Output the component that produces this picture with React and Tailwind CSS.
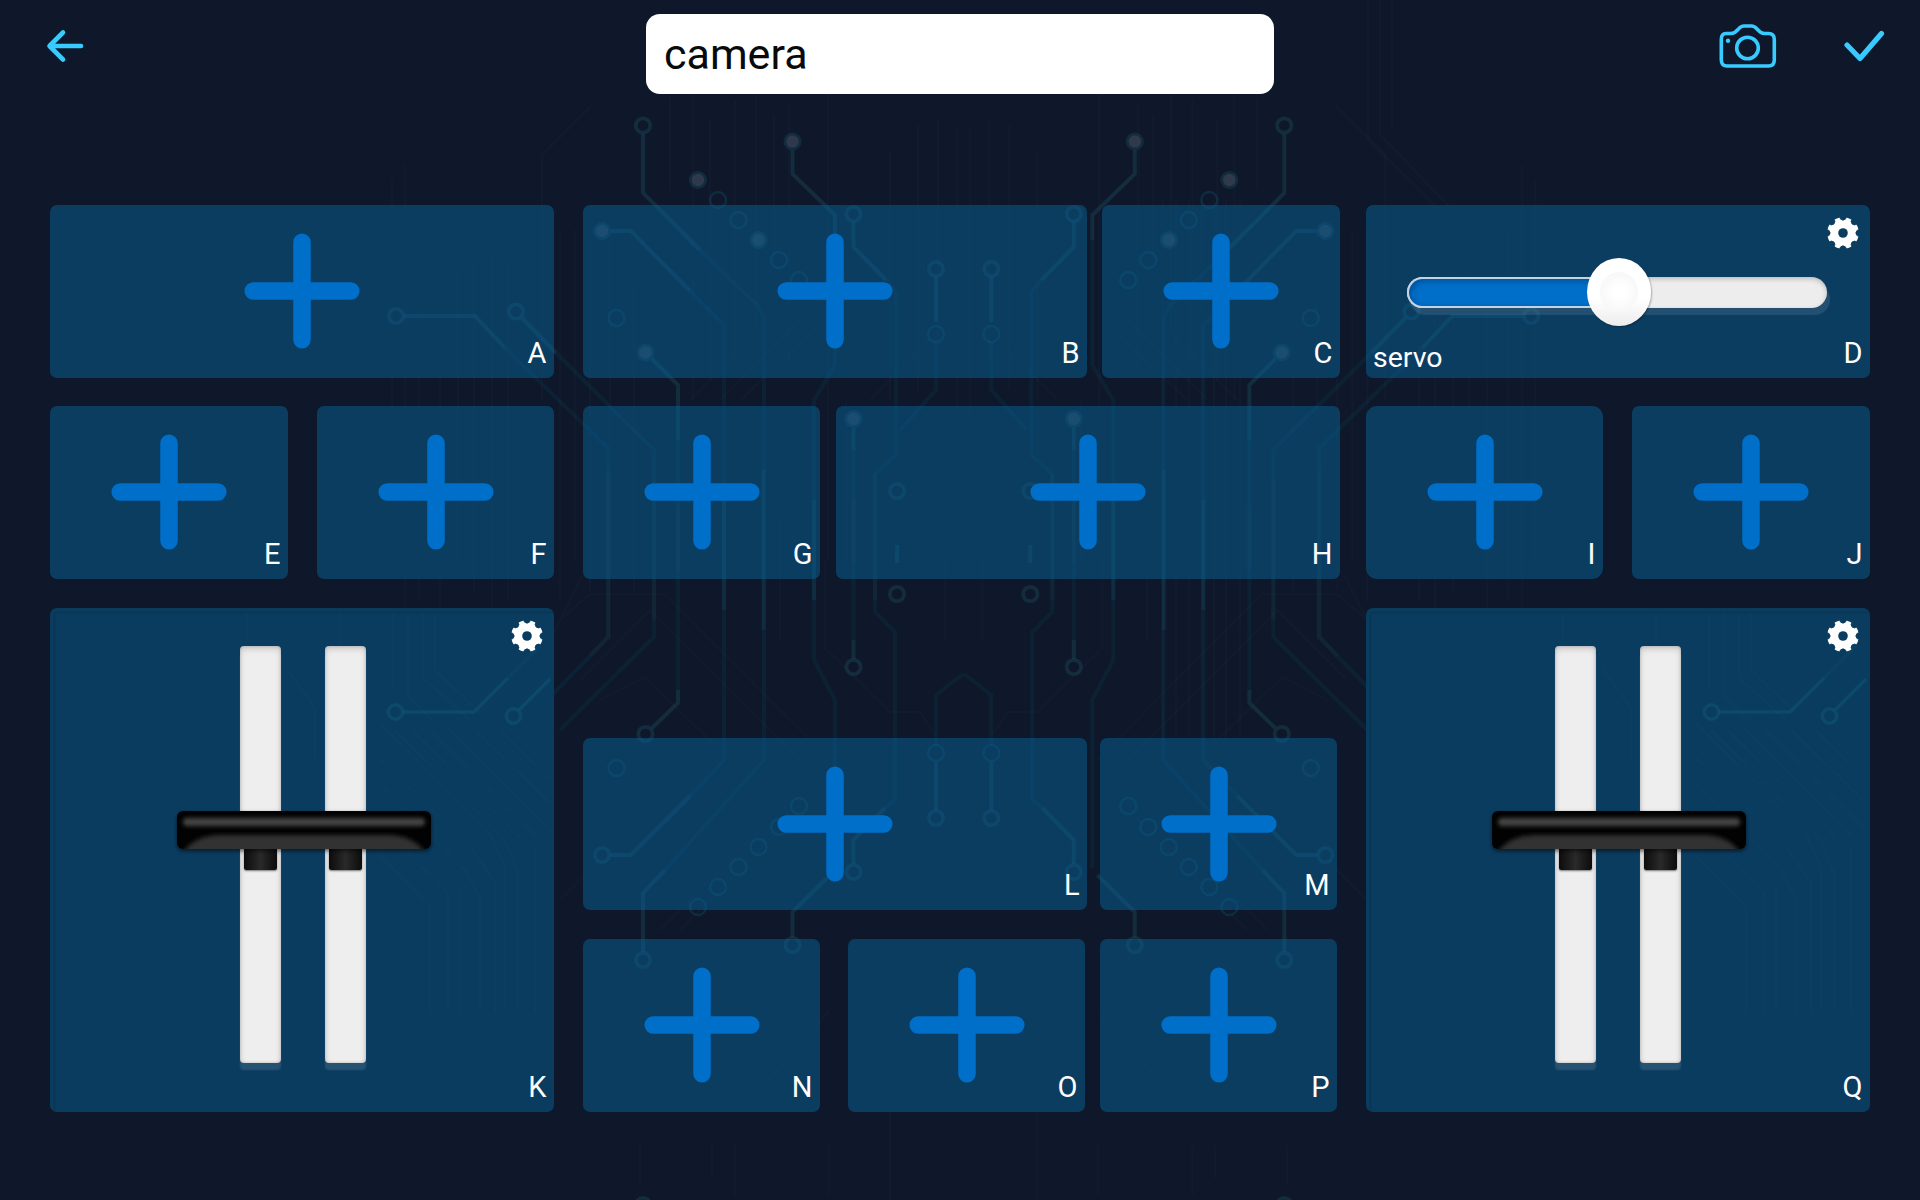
import React from "react";

const ring = (x, y, k) => <circle key={k} cx={x} cy={y} r="7.2" strokeWidth="3.8" />;
const faintRing = ([x, y]) => <circle key={x + "-" + y} cx={x} cy={y} r="8" strokeWidth="2.4" stroke="#0f6c8c" strokeOpacity="0.24" />;
const dot = (x, y) => (
  <g key={x + "d" + y} stroke="none">
    <circle cx={x} cy={y} r="9" fill="#1f5a70" fillOpacity="0.3" />
    <circle cx={x} cy={y} r="6.2" fill="#7a5f6c" fillOpacity="0.28" />
  </g>
);

const hairlines = [
  [392, 180, 560], [405, 165, 640], [419, 230, 600], [440, 300, 700], [458, 270, 560], [474, 260, 590], [492, 250, 640], [508, 260, 600],
  [560, 230, 600], [575, 230, 560], [590, 235, 590], [610, 230, 640], [634, 285, 590], [670, 98, 190], [693, 95, 400], [710, 120, 380],
  [735, 100, 360], [756, 95, 330], [774, 115, 260], [789, 105, 370], [828, 90, 560], [846, 400, 560], [780, 520, 640], [825, 560, 650],
  [890, 150, 400], [918, 125, 390], [938, 120, 360], [957, 130, 420], [945, 560, 640],
];

function HalfCircuit() {
  return (
    <g>
      <g strokeOpacity="0.19">
        {ring(643, 125.5, 1)}
        <path d="M643 134V193L700 250" />
        <path d="M792.5 150V174L835 215V240" />
        <path d="M611 231H631L690 291" />
        <path d="M652 359L678 385V440" />
        {ring(853.5, 214, 2)}
        <path d="M853.5 222V247L886 280" />
        {ring(936, 269, 3)}
        <path d="M936 277V322" />
        {ring(396, 316, 4)}
        <path d="M404 316H475L505 348" />
        {ring(516, 311.5, 5)}
        <path d="M522 318L556 353" />
        <path d="M853.5 428V450M853.5 640V659" />
        {ring(897, 491, 6)}
        {ring(897, 594, 7)}
        <path d="M897 545V563" />
        {ring(853.5, 667, 8)}
        <path d="M678 690V703L652 728" />
        {ring(645.5, 734, 9)}
        {ring(602, 855, 10)}
        <path d="M610 855H631L690 796" />
        {ring(643, 960, 11)}
        <path d="M643 952V893L665 870" />
        {ring(792.5, 945, 12)}
        <path d="M792.5 937V912L830 875" />
        {ring(853.5, 872, 13)}
        <path d="M853.5 864V840L885 808" />
        {ring(936, 818, 14)}
        <path d="M936 810V762" />
        {ring(643, 1205, 15)}
      </g>
      <g strokeOpacity="0.13">
        <path d="M608 470V637L590 656M654 480V620" />
        <path d="M678 505V570" />
        <path d="M724 500V610M763.5 470V630M814 500V600" />
        <path d="M875 474V600M853.5 500V563" />
      </g>
      <g stroke="#0a5f84" strokeOpacity="0.12">
        <path d="M700 250L758 306L764 318V760L665 870" />
        <path d="M690 291L724 325V760L690 796" />
        <path d="M835 240V365L814 400V660L835 700V868" />
        <path d="M505 348L608 448V470M556 353L654 450V480" />
        <path d="M590 656L560 687L470 775M654 620V637L560 730" />
        <path d="M886 280L896 292V455L875 474M875 600V612L895 632V800L885 808" />
        <path d="M936 342V390L900 430M936 745V695L963 674" />
        <path d="M678 440V505M678 570V690M853.5 563V640M853.5 450V500" />
      </g>
      {[[718, 200], [738.5, 220], [779, 260], [799, 280], [616.5, 318], [936, 334], [616.5, 768], [799, 806], [779, 827], [758.5, 847], [738.5, 867], [718, 887], [698, 907], [936, 753]].map(faintRing)}
      {[[698, 180], [758.5, 240], [792.5, 141.5], [602, 231], [645.5, 352.5], [853.5, 419]].map(([x, y]) => dot(x, y))}
      <g stroke="#6a6f8c" strokeWidth="2.5" strokeOpacity="0.035">
        {hairlines.map(([x, a, b]) => <path key={x} d={`M${x} ${a}V${b}`} />)}
        <path d="M542 400V155L592 105" />
        <path d="M560 620L590 594H665L830 760M580 680L650 610L800 760M600 700L645 677L730 760M545 650L583 575" />
        <path d="M690 400L760 330M720 400L800 320M740 400L820 325M870 400L930 340M827 650L890 712H920L935 735" />
        <path d="M560 900L640 820M660 930L760 830M680 930L790 820M760 1090L830 1010M640 1145V1185M712 1145V1178M735 1145V1195M829 1145V1195M890 1112V1200" />
      </g>
    </g>
  );
}

function Circuit() {
  return (
    <svg className="pointer-events-none absolute inset-0" width="1920" height="1200" viewBox="0 0 1920 1200" fill="none" stroke="#2d8796" strokeWidth="4">
      <HalfCircuit />
      <g transform="matrix(-1 0 0 1 1927.3 0)">
        <HalfCircuit />
      </g>
      <g stroke="#6a6f8c" strokeWidth="2.5" strokeOpacity="0.035">
        {[1163, 1176, 1189, 1202, 1214, 1226, 1240].map((x) => <path key={x} d={`M${x} 200V740`} />)}
        <path d="M1368 0V140L1440 210M1380 0V135L1455 212M1392 0V130" />
      </g>
    </svg>
  );
}

function Cell({ label, className }) {
  return (
    <div className={`relative flex items-center justify-center bg-[#086298]/50 pb-px ${className}`}>
      <svg width="116" height="116" viewBox="0 0 116 116" stroke="#006fc9" strokeWidth="17.5" strokeLinecap="round">
        <path d="M58 9.2V106.8M9.2 58H106.8" />
      </svg>
      <Letter>{label}</Letter>
    </div>
  );
}

function Letter({ children }) {
  return <span className="absolute right-[7.5px] bottom-[7px] text-[29px] leading-[36px] text-white">{children}</span>;
}

function Gear({ className }) {
  const notches = [0, 45, 90, 135, 180, 225, 270, 315];
  return (
    <svg className={`absolute ${className}`} width="32" height="32" viewBox="-16 -16 32 32">
      <mask id="gear-cutouts">
        <rect x="-16" y="-16" width="32" height="32" fill="#fff" />
        <circle r="4.8" fill="#000" />
        {notches.map((a) => (
          <path key={a} transform={`rotate(${a})`} d="M-3.6 -17L-2.6 -14Q0 -11.6 2.6 -14L3.6 -17Z" fill="#000" stroke="#000" strokeWidth="0.8" />
        ))}
      </mask>
      <circle r="15.8" fill="#fff" mask="url(#gear-cutouts)" />
    </svg>
  );
}

function ServoPanel() {
  return (
    <div className="relative flex h-[173px] items-center rounded-[7px] bg-[#086298]/50 pt-px pl-[41px]">
      <div className="relative h-[31px] w-[420px] rounded-full bg-[#ededed] shadow-[3px_7px_1px_rgba(255,255,255,0.10),inset_0_2px_5px_rgba(0,0,0,0.22)]">
        <div className="h-full w-[212px] rounded-l-full border-2 border-r-0 border-[#c3d3e2] bg-[#006fc9] shadow-[inset_2px_2px_6px_rgba(0,40,90,0.45)]" />
        <div className="absolute top-[-19px] left-[179.5px] flex h-[68px] w-[64px] items-center justify-center rounded-[50%] bg-gradient-to-b from-white from-60% to-[#ececec] shadow-[1px_1px_2px_rgba(0,0,0,0.3)]">
          <div className="h-[40px] w-[38px] rounded-[50%] bg-[radial-gradient(circle,#ffffff_20%,#f3f3f3_100%)]" />
        </div>
      </div>
      <Gear className="top-[12px] right-[11px]" />
      <span className="absolute bottom-[2px] left-[7px] text-[28.5px] leading-[36px] text-white">servo</span>
      <Letter>D</Letter>
    </div>
  );
}

function Slot() {
  return (
    <div className="h-[417px] w-[41px] rounded-[4px] bg-[#eeeeee] shadow-[0_7px_2px_rgba(255,255,255,0.12),inset_0_3px_6px_rgba(0,0,0,0.16),inset_0_0_3px_rgba(0,0,0,0.22)]" />
  );
}

function Stub() {
  return <div className="h-[21px] w-[33px] rounded-b-[2px] bg-gradient-to-r from-[#0c0c0c] via-[#2a2a2a] to-[#0c0c0c] shadow-[0_1px_2px_rgba(0,0,0,0.5)]" />;
}

function Handle() {
  return (
    <svg className="relative block overflow-visible" width="254" height="38" viewBox="0 0 254 38">
      <defs>
        <filter id="handle-soft" x="-5%" y="-60%" width="110%" height="220%">
          <feGaussianBlur stdDeviation="2" />
        </filter>
        <clipPath id="handle-shape">
          <rect width="254" height="38" rx="6" />
        </clipPath>
      </defs>
      <rect y="2" width="254" height="38" rx="6" fill="#000" fillOpacity="0.6" filter="url(#handle-soft)" />
      <g clipPath="url(#handle-shape)">
        <rect width="254" height="38" fill="#020202" />
        <rect x="6" y="7" width="242" height="8" rx="4" fill="#454545" filter="url(#handle-soft)" />
        <path d="M4 44Q16 24 44 24H210Q238 24 250 44Z" fill="#303030" filter="url(#handle-soft)" />
      </g>
    </svg>
  );
}

function ThrottlePanel({ label, className }) {
  return (
    <div className="relative h-[504px] overflow-hidden rounded-[7px] bg-[#0a3c60]">
      <svg className="absolute inset-0" width="504" height="504" viewBox="0 0 504 504" fill="none" stroke="#12708a" strokeWidth="3.6">
        <path d="M4.5 504V4.5H504" stroke="#0a3553" strokeWidth="1.5" />
        <g strokeOpacity="0.26">
          <circle cx="345.5" cy="104" r="7.2" />
          <path d="M353 104H424L458 70" />
          <circle cx="463.5" cy="108" r="7.2" />
          <path d="M469 102L500 71" />
        </g>
        <path d="M458 70L490 38" strokeOpacity="0.12" />
        <g stroke="#3a6d7c" strokeWidth="2.5" strokeOpacity="0.055">
          <path d="M343 5V80M358 5V88L380 110M373 5V70L420 112M385 5V62L430 105M197 5V30M290 60V5M236 60L265 100V150" />
          <path d="M330 115L440 225L455 260V400M345 122L455 232L468 265V400M362 122L470 230M380 122L486 228M400 122L500 222M425 122L500 195M450 122L500 172M330 150L425 245L445 275V405M328 175L415 262L430 290V405M328 215L398 285V405M328 245L380 298V405M410 280V405M485 240V405" />
        </g>
      </svg>
      <div className={`relative mt-[38px] flex gap-[44px] ${className}`}>
        <Slot />
        <Slot />
        <div className="absolute top-[165px] left-[-62.5px] w-[254px]">
          <Handle />
          <div className="flex gap-[52px] pl-[66.5px]">
            <Stub />
            <Stub />
          </div>
        </div>
      </div>
      <Gear className="top-[12px] right-[11px]" />
      <Letter>{label}</Letter>
    </div>
  );
}

function Header() {
  return (
    <header className="relative grid h-[94px] grid-cols-[600px_628px_1fr] items-start pt-[14px] pl-[46px]">
      <svg className="mt-[14px]" width="40" height="36" viewBox="0 0 40 36" fill="none" stroke="#38cbff" strokeWidth="4.6" strokeLinecap="round" strokeLinejoin="round">
        <path d="M35 18H4M17 4.5L3.5 18L17 31.5" />
      </svg>
      <input
        className="h-[80px] w-full rounded-[14px] bg-white px-[18px] text-[43px] text-[#0a0a0a] outline-none"
        defaultValue="camera"
        aria-label="Name"
      />
      <div className="mr-[34px] flex w-[170px] justify-between justify-self-end">
        <svg className="mt-[8px]" width="62" height="50" viewBox="0 0 62 50" fill="none" stroke="#38cbff" strokeWidth="3.6" strokeLinejoin="round">
          <path d="M10 11.500H15C19 11.500 20.500 9.500 22.500 7C24.500 4.600 25.500 4 28 4H35.500C38 4 39 4.600 41 7C43 9.500 44.500 11.500 48.500 11.500H52.500Q58.300 11.500 58.300 17.500V38Q58.300 44 52.500 44H11Q5.300 44 5.300 38V17.500Q5.300 11.500 10 11.500Z" />
          <circle cx="31.500" cy="26" r="10.800" />
          <circle cx="12" cy="18.700" r="2.200" fill="#38cbff" stroke="none" />
        </svg>
        <svg className="mt-[14px]" width="42" height="38" viewBox="0 0 42 38" fill="none" stroke="#38cbff" strokeWidth="5.2" strokeLinecap="round" strokeLinejoin="round">
          <path d="M3 17L16 30.5L37.5 5.5" />
        </svg>
      </div>
    </header>
  );
}

export default function App() {
  return (
    <div className="relative h-[1200px] w-[1920px] overflow-hidden bg-[#0e182a] font-['Roboto',sans-serif]">
      <Circuit />
      <Header />
      <main className="relative mt-[111px] flex pl-[50px]">
        <section className="flex w-[504px] flex-col">
          <Cell label="A" className="h-[173px] rounded-[7px]" />
          <div className="mt-[28px] mb-[29px] flex justify-between">
            <Cell label="E" className="h-[173px] w-[238px] rounded-[7px]" />
            <Cell label="F" className="h-[173px] w-[237px] rounded-[7px]" />
          </div>
          <ThrottlePanel label="K" className="ml-[189.5px]" />
        </section>
        <section className="ml-[29px] flex w-[757px] flex-col">
          <div className="flex justify-between">
            <Cell label="B" className="h-[173px] w-[504px] rounded-[7px]" />
            <Cell label="C" className="h-[173px] w-[238px] rounded-[7px]" />
          </div>
          <div className="mt-[28px] flex justify-between">
            <Cell label="G" className="h-[173px] w-[237px] rounded-[7px]" />
            <Cell label="H" className="h-[173px] w-[504px] rounded-[7px]" />
          </div>
          <div className="mt-[159px] flex gap-[13px]">
            <Cell label="L" className="h-[172px] w-[504px] rounded-[7px]" />
            <Cell label="M" className="h-[172px] w-[237px] rounded-[7px]" />
          </div>
          <div className="mt-[29px] flex">
            <Cell label="N" className="h-[173px] w-[237px] rounded-[7px]" />
            <Cell label="O" className="ml-[28px] h-[173px] w-[237px] rounded-[7px]" />
            <Cell label="P" className="ml-[15px] h-[173px] w-[237px] rounded-[7px]" />
          </div>
        </section>
        <section className="ml-[26px] flex w-[504px] flex-col">
          <ServoPanel />
          <div className="mt-[28px] mb-[29px] flex justify-between">
            <Cell label="I" className="h-[173px] w-[237px] rounded-[11px]" />
            <Cell label="J" className="h-[173px] w-[238px] rounded-[7px]" />
          </div>
          <ThrottlePanel label="Q" className="ml-[188.5px]" />
        </section>
      </main>
    </div>
  );
}
